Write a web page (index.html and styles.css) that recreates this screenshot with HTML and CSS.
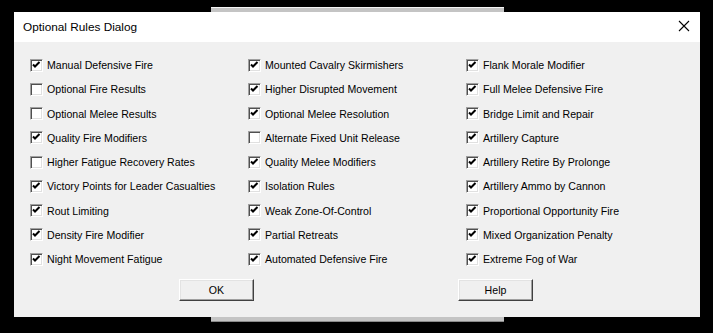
FILE: index.html
```html
<!DOCTYPE html>
<html lang="en">
<head>
  <meta charset="UTF-8">
  <title>Optional Rules Dialog</title>
  <link rel="stylesheet" href="styles.css">
</head>
<body>
  <div class="back-window"></div>

  <div class="dialog">
    <div class="title-bar">
      <span class="title">Optional Rules Dialog</span>
      <svg class="close" width="12" height="12" viewBox="0 0 12 12">
        <path d="M1 1 L11 11 M11 1 L1 11" stroke="#000" stroke-width="1.1" fill="none"/>
      </svg>
    </div>

    <div class="dialog-body">
      <div class="rules">
        <label class="rule"><span class="box on"></span>Manual Defensive Fire</label>
        <label class="rule"><span class="box on"></span>Mounted Cavalry Skirmishers</label>
        <label class="rule"><span class="box on"></span>Flank Morale Modifier</label>

        <label class="rule"><span class="box"></span>Optional Fire Results</label>
        <label class="rule"><span class="box on"></span>Higher Disrupted Movement</label>
        <label class="rule"><span class="box on"></span>Full Melee Defensive Fire</label>

        <label class="rule"><span class="box"></span>Optional Melee Results</label>
        <label class="rule"><span class="box on"></span>Optional Melee Resolution</label>
        <label class="rule"><span class="box on"></span>Bridge Limit and Repair</label>

        <label class="rule"><span class="box on"></span>Quality Fire Modifiers</label>
        <label class="rule"><span class="box"></span>Alternate Fixed Unit Release</label>
        <label class="rule"><span class="box on"></span>Artillery Capture</label>

        <label class="rule"><span class="box"></span>Higher Fatigue Recovery Rates</label>
        <label class="rule"><span class="box on"></span>Quality Melee Modifiers</label>
        <label class="rule"><span class="box on"></span>Artillery Retire By Prolonge</label>

        <label class="rule"><span class="box on"></span>Victory Points for Leader Casualties</label>
        <label class="rule"><span class="box on"></span>Isolation Rules</label>
        <label class="rule"><span class="box on"></span>Artillery Ammo by Cannon</label>

        <label class="rule"><span class="box on"></span>Rout Limiting</label>
        <label class="rule"><span class="box on"></span>Weak Zone-Of-Control</label>
        <label class="rule"><span class="box on"></span>Proportional Opportunity Fire</label>

        <label class="rule"><span class="box on"></span>Density Fire Modifier</label>
        <label class="rule"><span class="box on"></span>Partial Retreats</label>
        <label class="rule"><span class="box on"></span>Mixed Organization Penalty</label>

        <label class="rule"><span class="box on"></span>Night Movement Fatigue</label>
        <label class="rule"><span class="box on"></span>Automated Defensive Fire</label>
        <label class="rule"><span class="box on"></span>Extreme Fog of War</label>
      </div>

      <div class="buttons">
        <button class="btn">OK</button>
        <button class="btn">Help</button>
      </div>
    </div>
  </div>
</body>
</html>
```

FILE: styles.css
```css
* {
  margin: 0;
  padding: 0;
  box-sizing: border-box;
}

body {
  width: 713px;
  height: 333px;
  background-color: #000;
  font-family: 'Liberation Sans', Arial, sans-serif;
  color: #000;
  position: relative;
  overflow: hidden;
}

/* window sitting behind the dialog, only its edges show */
.back-window {
  position: absolute;
  left: 211px;
  top: 7px;
  width: 293px;
  height: 315px;
  background-color: #c4c4c4;
  border-top: 1px solid #f4f4f4;
  border-bottom: 1px solid #8a8a8a;
}

.dialog {
  position: absolute;
  left: 14px;
  top: 12px;
  width: 686px;
  height: 305px;
  background-color: #f0f0f0;
  display: flex;
  flex-direction: column;
}

.title-bar {
  height: 30px;
  background-color: #fff;
  display: flex;
  align-items: center;
  justify-content: space-between;
  padding: 0 10px 0 9px;
}

.title {
  font-size: 11.8px;
  font-family: 'Liberation Sans', Arial, sans-serif;
  padding-bottom: 1px;
}

.close {
  display: block;
  margin-top: -2px;
}

.dialog-body {
  flex: 1;
  padding: 11px 0 0 16px;
}

.rules {
  display: grid;
  grid-template-columns: 218px 218px 218px;
  grid-auto-rows: 24.25px;
}

.rule {
  display: flex;
  align-items: center;
  font-size: 10.6px;
  white-space: nowrap;
}

.box {
  width: 13px;
  height: 13px;
  margin-right: 4px;
  background-color: #fff;
  border-top: 1px solid #a0a0a0;
  border-left: 1px solid #a0a0a0;
  border-right: 1px solid #fff;
  border-bottom: 1px solid #fff;
  box-shadow: inset 1px 1px 0 #505050, inset -1px -1px 0 #e0e0e0;
  flex-shrink: 0;
}

.box.on {
  background-image: url("data:image/svg+xml,%3Csvg xmlns='http://www.w3.org/2000/svg' width='11' height='11' viewBox='0 0 11 11'%3E%3Cpath d='M2 4.5 L4 6.5 L8.5 2' stroke='%23000' stroke-width='2' fill='none'/%3E%3C/svg%3E");
  background-repeat: no-repeat;
  background-position: 0 0;
}

.buttons {
  display: flex;
  margin-top: 8px;
  padding-left: 149px;
  gap: 204px;
}

.btn {
  width: 75px;
  height: 22px;
  font-family: 'Liberation Sans', Arial, sans-serif;
  font-size: 10.6px;
  background-color: #f0f0f0;
  border-top: 1px solid #fff;
  border-left: 1px solid #fff;
  border-right: 1px solid #404040;
  border-bottom: 1px solid #404040;
  box-shadow: inset -1px -1px 0 #a0a0a0, inset 1px 1px 0 #e3e3e3;
  color: #000;
}
```
